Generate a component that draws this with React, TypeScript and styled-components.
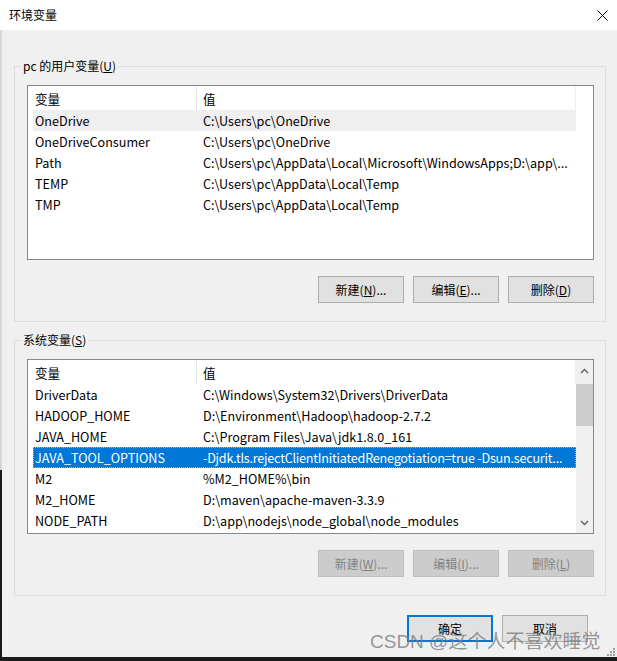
import React from 'react';
import styled, { createGlobalStyle } from 'styled-components';

const GlobalStyle = createGlobalStyle`
  html, body { margin: 0; padding: 0; }
  body {
    width: 617px;
    height: 661px;
    overflow: hidden;
    background: linear-gradient(to bottom, #d6d6d6 0, #d6d6d6 470px, #1b1b1b 470px);
    font-family: "Noto Sans CJK SC", "Noto Sans", sans-serif;
    font-size: 12px;
    color: #000;
  }
  * { box-sizing: border-box; }
`;

const Window = styled.div`
  position: relative;
  width: 617px;
  height: 657px;
  display: flex;
  flex-direction: column;
`;

const TitleBar = styled.div`
  flex: none;
  height: 30px;
  background: #fff;
  display: flex;
  align-items: center;
  justify-content: space-between;
  padding: 0 9px 0 9px;
`;

const Title = styled.span`
  font-size: 12px;
  line-height: 14px;
`;

const CloseButton = styled.span`
  display: flex;
  width: 12px;
  height: 12px;
  align-items: center;
  justify-content: center;
`;

const Body = styled.div`
  flex: 1;
  margin-left: 2px;
  background: #f0f0f0;
  display: flex;
  flex-direction: column;
  padding: 36px 11px 0 12px;
`;

const GroupBox = styled.section<{ $gap?: number }>`
  display: flex;
  flex-direction: column;
  border: 1px solid #dcdcdc;
  padding: 0 11px 18px 12px;
  margin-top: ${(p) => p.$gap ?? 0}px;
`;

const Legend = styled.div`
  align-self: flex-start;
  margin: -8px 0 0 -6px;
  padding: 0 2px;
  height: 14px;
  line-height: 14px;
  background: #f0f0f0;
  white-space: nowrap;
`;

const ListView = styled.div`
  margin-top: 12px;
  height: 175px;
  flex: none;
  border: 1px solid #828790;
  background: #fff;
  display: flex;
  overflow: hidden;
  font-size: 12.6px;
`;

const ListContent = styled.div`
  flex: 1;
  min-width: 0;
  display: flex;
  flex-direction: column;
`;

const Header = styled.div`
  display: flex;
  height: 24px;
  flex: none;
  align-items: center;
  border-right: 1px solid #eeeeee;
`;

const HeaderCell = styled.div<{ $first?: boolean }>`
  height: 100%;
  display: flex;
  align-items: center;
  ${(p) =>
    p.$first
      ? `width: 169px; padding-left: 7px; border-right: 1px solid #e5e5e5;`
      : `flex: 1; padding-left: 6px;`}
`;

const Row = styled.div<{ $state?: 'hover' | 'selected' }>`
  display: flex;
  height: 21px;
  flex: none;
  margin-left: 5px;
  align-items: center;
  white-space: nowrap;
  background: ${(p) =>
    p.$state === 'selected' ? '#0078d7' : p.$state === 'hover' ? '#efefef' : 'transparent'};
  color: ${(p) => (p.$state === 'selected' ? '#fff' : '#000')};
  outline: ${(p) => (p.$state === 'selected' ? '1px dotted #f0a050' : 'none')};
  outline-offset: -1px;
`;

const NameCell = styled.div`
  width: 166px;
  padding-left: 2px;
  overflow: hidden;
`;

const ValueCell = styled.div<{ $condensed?: boolean }>`
  flex: 1;
  min-width: 0;
  padding-left: 4px;
  overflow: hidden;
  letter-spacing: ${(p) => (p.$condensed ? '-0.22px' : 'normal')};
`;

const Spacer = styled.div`
  width: 17px;
  flex: none;
`;

const ScrollBar = styled.div`
  width: 17px;
  flex: none;
  background: #f0f0f0;
  display: flex;
  flex-direction: column;
`;

const ArrowButton = styled.div`
  height: 21px;
  flex: none;
  display: flex;
  align-items: center;
  justify-content: center;
`;

const Track = styled.div`
  flex: 1;
  display: flex;
  flex-direction: column;
`;

const Thumb = styled.div`
  margin-top: 3px;
  height: 42px;
  background: #cdcdcd;
`;

const ButtonRow = styled.div`
  display: flex;
  justify-content: flex-end;
  gap: 9px;
  margin-top: 16px;
`;

const Button = styled.button<{ $default?: boolean }>`
  width: 86px;
  height: 27px;
  padding: 0;
  font-family: inherit;
  font-size: 12px;
  color: #000;
  background: #e1e1e1;
  border: ${(p) => (p.$default ? '2px solid #0078d7' : '1px solid #adadad')};
  display: flex;
  align-items: center;
  justify-content: center;
  &:disabled {
    background: #cccccc;
    border-color: #bfbfbf;
    color: #838383;
  }
`;

const Footer = styled.div`
  display: flex;
  justify-content: flex-end;
  gap: 9px;
  margin-top: 19px;
  padding-right: 18px;
`;

const Watermark = styled.div`
  position: absolute;
  left: 370px;
  top: 631px;
  font-family: "Liberation Sans", "Noto Sans CJK SC", sans-serif;
  font-size: 19px;
  line-height: 22px;
  color: rgba(125, 125, 125, 0.8);
  white-space: nowrap;
  pointer-events: none;
`;

const Grip = styled.svg`
  position: absolute;
  right: 2px;
  bottom: 1px;
`;

type Item = { name: string; value: string; state?: 'hover' | 'selected'; condensed?: boolean };

const userVars: Item[] = [
  { name: 'OneDrive', value: 'C:\\Users\\pc\\OneDrive', state: 'hover' },
  { name: 'OneDriveConsumer', value: 'C:\\Users\\pc\\OneDrive' },
  { name: 'Path', value: 'C:\\Users\\pc\\AppData\\Local\\Microsoft\\WindowsApps;D:\\app\\...' },
  { name: 'TEMP', value: 'C:\\Users\\pc\\AppData\\Local\\Temp' },
  { name: 'TMP', value: 'C:\\Users\\pc\\AppData\\Local\\Temp' },
];

const sysVars: Item[] = [
  { name: 'DriverData', value: 'C:\\Windows\\System32\\Drivers\\DriverData' },
  { name: 'HADOOP_HOME', value: 'D:\\Environment\\Hadoop\\hadoop-2.7.2' },
  { name: 'JAVA_HOME', value: 'C:\\Program Files\\Java\\jdk1.8.0_161' },
  {
    name: 'JAVA_TOOL_OPTIONS',
    value: '-Djdk.tls.rejectClientInitiatedRenegotiation=true -Dsun.securit...',
    state: 'selected',
    condensed: true,
  },
  { name: 'M2', value: '%M2_HOME%\\bin' },
  { name: 'M2_HOME', value: 'D:\\maven\\apache-maven-3.3.9' },
  { name: 'NODE_PATH', value: 'D:\\app\\nodejs\\node_global\\node_modules' },
];

const Chevron = ({ up }: { up?: boolean }) => (
  <svg width="9" height="6" viewBox="0 0 9 6">
    <polyline
      points={up ? '1,5 4.5,1.5 8,5' : '1,1 4.5,4.5 8,1'}
      fill="none"
      stroke="#606060"
      strokeWidth="1.4"
    />
  </svg>
);

const List = ({ items, scroll }: { items: Item[]; scroll?: boolean }) => (
  <ListView>
    <ListContent>
      <Header>
        <HeaderCell $first>变量</HeaderCell>
        <HeaderCell>值</HeaderCell>
      </Header>
      {items.map((it) => (
        <Row key={it.name} $state={it.state}>
          <NameCell>{it.name}</NameCell>
          <ValueCell $condensed={it.condensed}>{it.value}</ValueCell>
        </Row>
      ))}
    </ListContent>
    {scroll ? (
      <ScrollBar>
        <ArrowButton>
          <Chevron up />
        </ArrowButton>
        <Track>
          <Thumb />
        </Track>
        <ArrowButton>
          <Chevron />
        </ArrowButton>
      </ScrollBar>
    ) : (
      <Spacer />
    )}
  </ListView>
);

export default function App() {
  return (
    <>
      <GlobalStyle />
      <Window>
        <TitleBar>
          <Title>环境变量</Title>
          <CloseButton>
            <svg width="11" height="11" viewBox="0 0 11 11">
              <path d="M0.5 0.5 L10.5 10.5 M10.5 0.5 L0.5 10.5" stroke="#000" strokeWidth="1" />
            </svg>
          </CloseButton>
        </TitleBar>
        <Body>
          <GroupBox>
            <Legend>
              pc 的用户变量(<u>U</u>)
            </Legend>
            <List items={userVars} />
            <ButtonRow>
              <Button>
                新建(<u>N</u>)...
              </Button>
              <Button>
                编辑(<u>E</u>)...
              </Button>
              <Button>
                删除(<u>D</u>)
              </Button>
            </ButtonRow>
          </GroupBox>
          <GroupBox $gap={18}>
            <Legend>
              系统变量(<u>S</u>)
            </Legend>
            <List items={sysVars} scroll />
            <ButtonRow>
              <Button disabled>
                新建(<u>W</u>)...
              </Button>
              <Button disabled>
                编辑(<u>I</u>)...
              </Button>
              <Button disabled>
                删除(<u>L</u>)
              </Button>
            </ButtonRow>
          </GroupBox>
          <Footer>
            <Button $default>确定</Button>
            <Button>取消</Button>
          </Footer>
        </Body>
        <Watermark>CSDN @这个人不喜欢睡觉</Watermark>
        <Grip width="8" height="8" viewBox="0 0 8 8">
          <g fill="#a0a0a0">
            <rect x="6" y="0" width="2" height="2" />
            <rect x="3" y="3" width="2" height="2" />
            <rect x="6" y="3" width="2" height="2" />
            <rect x="0" y="6" width="2" height="2" />
            <rect x="3" y="6" width="2" height="2" />
            <rect x="6" y="6" width="2" height="2" />
          </g>
        </Grip>
      </Window>
    </>
  );
}
